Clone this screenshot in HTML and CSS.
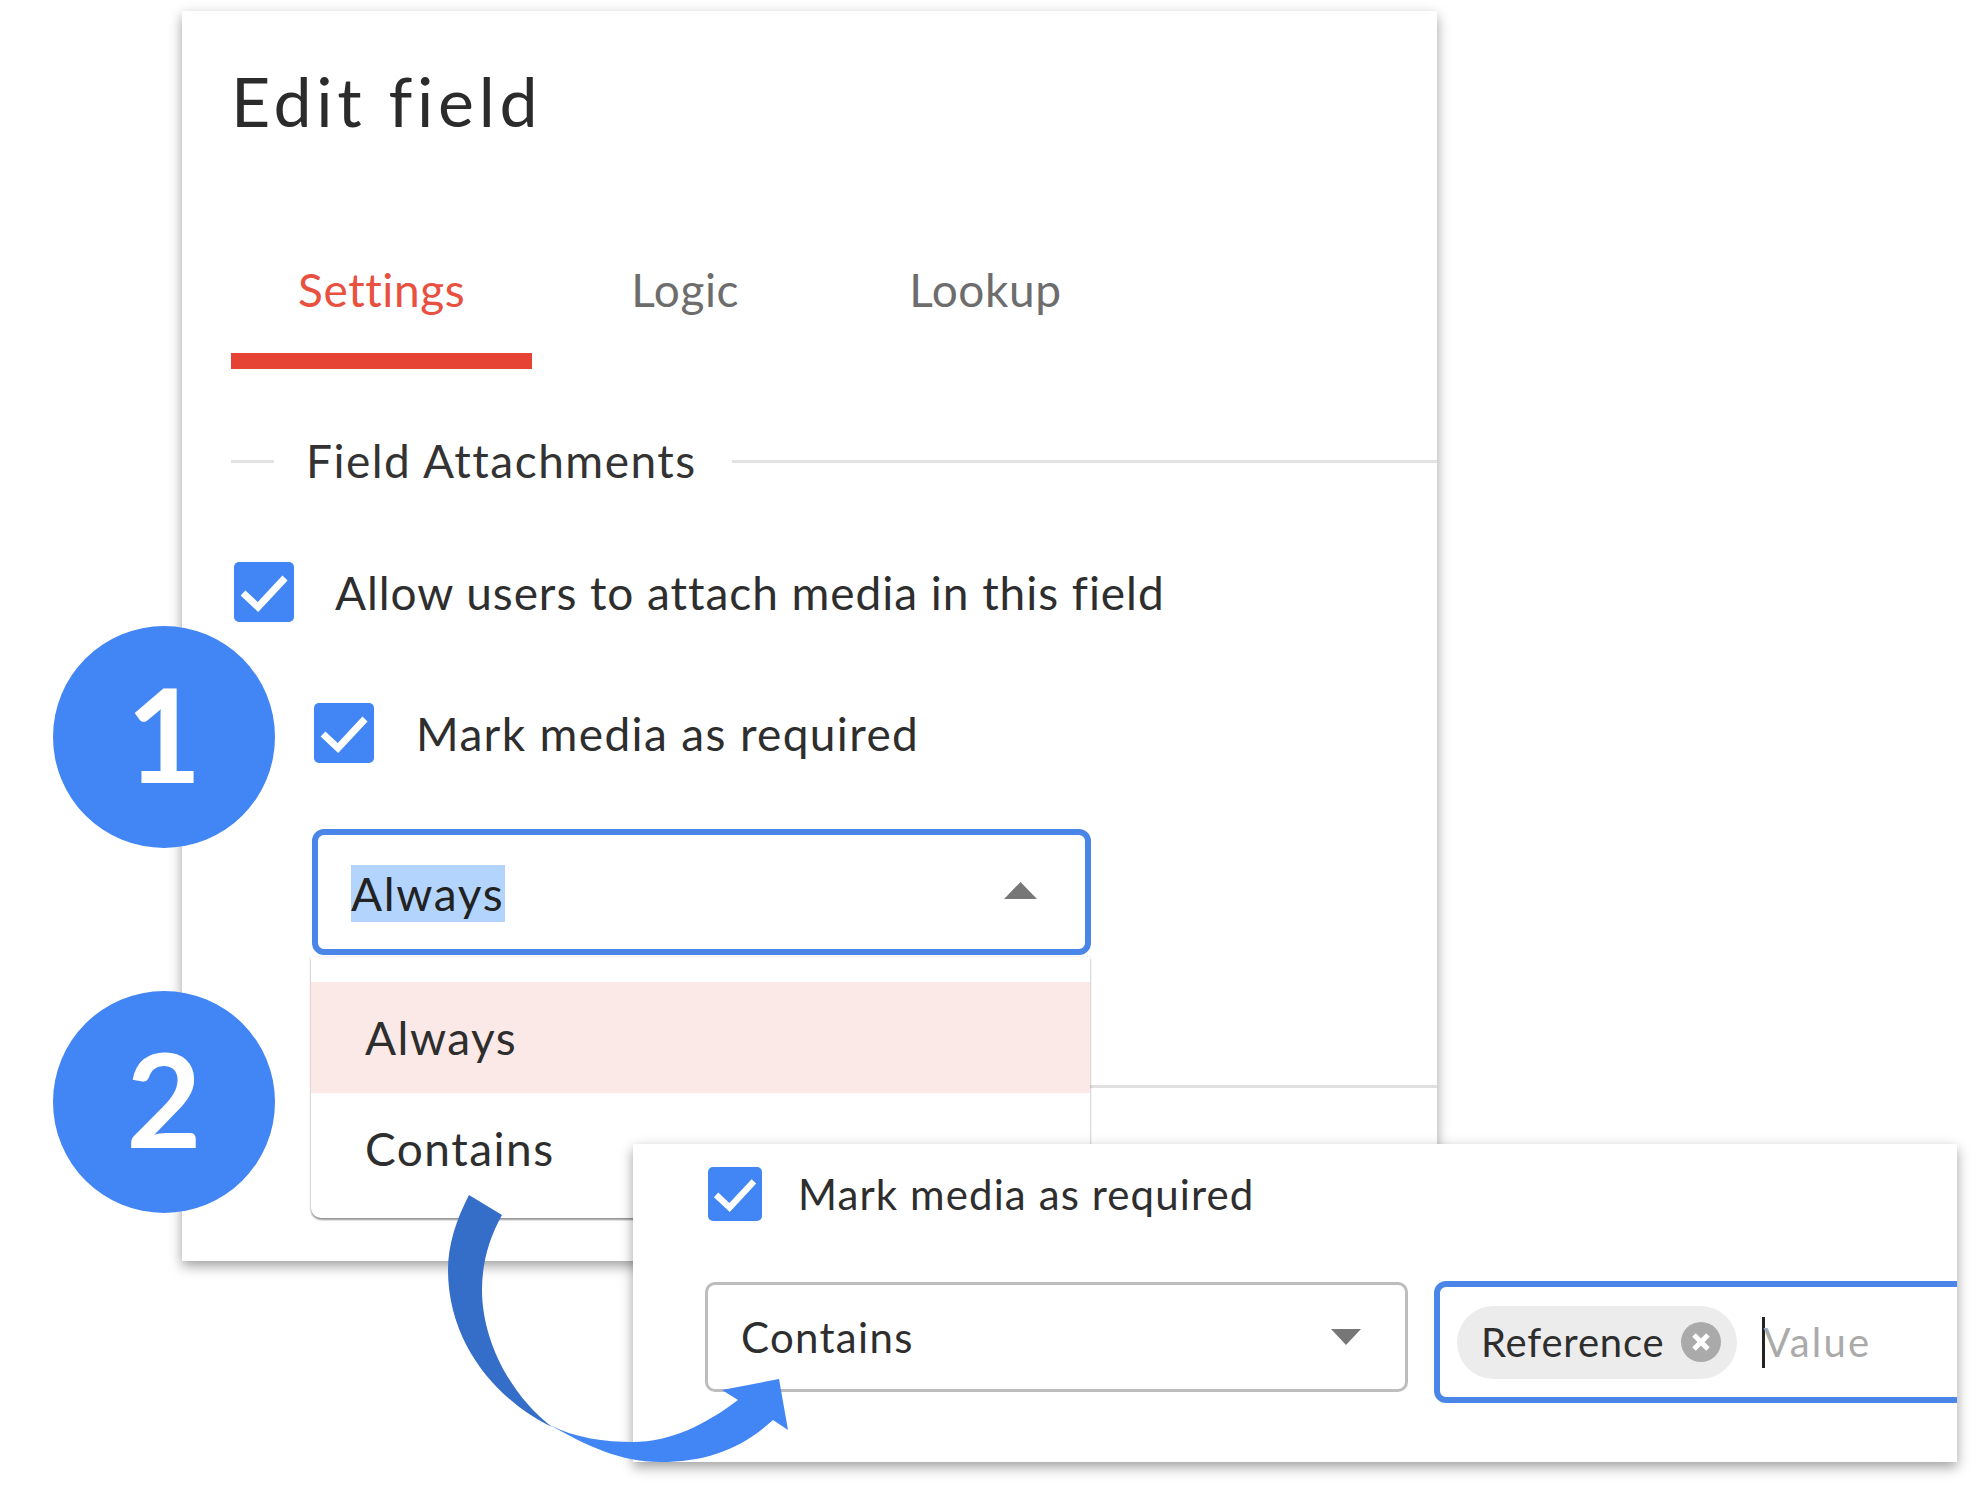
FILE: index.html
```html
<!DOCTYPE html>
<html lang="en">
<head>
<meta charset="utf-8">
<title>Edit field</title>
<link rel="stylesheet" href="styles.css">
</head>
<body>
<div class="stage">
  <section class="card">
    <h1 class="title">Edit field</h1>
    <nav class="tabs">
      <span class="tab tab-active">Settings</span>
      <span class="tab">Logic</span>
      <span class="tab tab-last">Lookup</span>
    </nav>
    <div class="section-head">
      <span class="rule rule-short"></span>
      <span class="section-label">Field Attachments</span>
      <span class="rule rule-long"></span>
    </div>
    <label class="check-row row-main">
      <span class="check"><svg viewBox="0 0 60 60" class="tick"><path d="M9 31 24 45 51 16"/></svg></span>
      <span class="check-label label-allow">Allow users to attach media in this field</span>
    </label>
    <label class="check-row row-sub">
      <span class="check"><svg viewBox="0 0 60 60" class="tick"><path d="M9 31 24 45 51 16"/></svg></span>
      <span class="check-label">Mark media as required</span>
    </label>
    <div class="select-wrap">
      <div class="select-open">
        <span class="selected-text">Always</span>
        <svg class="tri tri-up" viewBox="0 0 33 17"><path d="M16.5 0 33 17H0Z"/></svg>
      </div>
      <ul class="menu">
        <li class="menu-item menu-item-active">Always</li>
        <li class="menu-item">Contains</li>
      </ul>
    </div>
    <div class="card-line"></div>
  </section>

  <section class="card-two">
    <label class="check-row">
      <span class="check check-small"><svg viewBox="0 0 60 60" class="tick"><path d="M9 31 24 45 51 16"/></svg></span>
      <span class="check-label label-small">Mark media as required</span>
    </label>
    <div class="fields">
      <div class="select-closed">
        <span>Contains</span>
        <svg class="tri tri-down" viewBox="0 0 30 16"><path d="M0 0H30L15 16Z"/></svg>
      </div>
      <div class="value-input">
        <span class="chip">Reference
          <svg class="chip-close" viewBox="0 0 40 40"><circle cx="20" cy="20" r="20"/><path d="M13 13 27 27M27 13 13 27"/></svg>
        </span>
        <span class="caret"></span>
        <span class="placeholder">Value</span>
      </div>
    </div>
  </section>

  <div class="badge badge-one">1</div>
  <div class="badge badge-two">2</div>

  <svg class="arrow" viewBox="0 0 1972 1508" width="1972" height="1508">
    <path class="arrow-tail" d="M469 1195 502 1215C488 1240 482 1265 482 1290 482 1340 510 1395 552 1427 505 1405 448 1350 448 1270 448 1245 456 1220 469 1195Z"/>
    <path class="arrow-head" d="M550 1425C575 1438 605 1442 633 1442 670 1442 705 1425 738 1400L722 1390 779 1379 788 1430 773 1420C740 1450 705 1462 660 1462 620 1462 585 1445 550 1425Z"/>
  </svg>
</div>
</body>
</html>
```

FILE: styles.css
```css
* { box-sizing: border-box; }
html, body { margin: 0; background: #fff; }
body { font-family: "Lato", "Liberation Sans", sans-serif; color: #2e2e2e; }

.stage {
  position: relative;
  width: 1972px;
  height: 1508px;
  padding: 11px 0 0 182px;
  overflow: hidden;
}

.card {
  width: 1255px;
  height: 1250px;
  padding: 50px 0 0 49px;
  background: #fff;
  box-shadow: 0 5px 12px rgba(0, 0, 0, .38);
}

.title {
  margin: 0;
  font-size: 68px;
  line-height: 80px;
  font-weight: 400;
  letter-spacing: 4.7px;
  color: #2b2b2b;
}

.tabs { display: flex; gap: 32px; margin-top: 119px; }
.tab {
  padding: 0 67px 49px;
  font-size: 46px;
  line-height: 60px;
  letter-spacing: .6px;
  color: #6d6d6d;
}
.tab-active { color: #e8503f; border-bottom: 16px solid #e74335; padding-bottom: 33px; }
.tab-last { margin-left: 4px; }

.section-head { display: flex; align-items: center; gap: 32px; margin-top: 64px; }
.rule { height: 3px; background: #e2e2e2; }
.rule-short { width: 43px; }
.rule-long { flex: 1; }
.section-label { margin-right: 3px; font-size: 46px; line-height: 56px; letter-spacing: 1.5px; color: #333; }

.check-row { display: flex; align-items: center; }
.row-main { margin: 73px 0 0 3px; gap: 41px; }
.row-sub { margin: 81px 0 0 83px; gap: 42px; }

.check {
  width: 60px;
  height: 60px;
  flex: none;
  border-radius: 5px;
  background: #4285f4;
}
.check-small { width: 54px; height: 54px; }
.tick { display: block; width: 100%; height: 100%; }
.tick path { fill: none; stroke: #fff; stroke-width: 7; }

.check-label { padding-top: 2px; font-size: 46px; line-height: 58px; letter-spacing: 1.36px; }
.label-allow { letter-spacing: .95px; }
.label-small { padding-top: 0; font-size: 42px; line-height: 54px; letter-spacing: 1.1px; }

.select-wrap { position: relative; width: 779px; margin: 66px 0 0 81px; }
.select-open {
  display: flex;
  align-items: center;
  justify-content: space-between;
  height: 126px;
  padding: 2px 48px 0 33px;
  border: 6px solid #4a86e8;
  border-radius: 12px;
  font-size: 46px;
}
.selected-text { line-height: 57px; background: #b3d4fc; color: #222; letter-spacing: 1.7px; }
.tri { display: block; fill: #777; flex: none; }
.tri-up { width: 33px; height: 17px; margin-top: -5px; }
.tri-down { width: 30px; height: 16px; }

.menu {
  position: absolute;
  top: 128px;
  left: -1px;
  width: 779px;
  height: 261px;
  margin: 0;
  padding: 25px 0 0;
  list-style: none;
  background: #fff;
  border-radius: 0 0 10px 10px;
  box-shadow: 0 2px 2px rgba(0, 0, 0, .4), 0 0 3px rgba(0, 0, 0, .12);
}
.menu-item {
  height: 111px;
  padding-left: 54px;
  font-size: 46px;
  line-height: 111px;
  letter-spacing: 1.5px;
}
.menu-item-active { background: #fbe9e7; }

.card-line { height: 3px; margin: 130px 0 0 81px; background: #e0e0e0; }

.card-two {
  position: absolute;
  left: 633px;
  top: 1144px;
  width: 1324px;
  height: 318px;
  padding: 23px 0 0 75px;
  background: #fff;
  overflow: hidden;
  box-shadow: 0 5px 12px rgba(0, 0, 0, .38);
}
.card-two .check-row { gap: 36px; }

.fields { display: flex; align-items: flex-start; gap: 26px; margin: 60px 0 0 -3px; }
.select-closed {
  display: flex;
  align-items: center;
  justify-content: space-between;
  flex: none;
  width: 703px;
  height: 110px;
  margin-top: 1px;
  padding: 0 44px 0 33px;
  border: 3px solid #bdbdbd;
  border-radius: 10px;
  font-size: 42px;
  letter-spacing: 1.3px;
}
.value-input {
  display: flex;
  align-items: center;
  flex: none;
  width: 620px;
  height: 122px;
  padding-left: 17px;
  border: 6px solid #4a86e8;
  border-radius: 12px;
  font-size: 40px;
}
.chip {
  display: flex;
  align-items: center;
  gap: 17px;
  height: 73px;
  padding: 0 16px 0 24px;
  border-radius: 37px;
  background: #ececec;
  letter-spacing: .8px;
}
.chip-close { width: 40px; height: 40px; flex: none; }
.chip-close circle { fill: #aaa; }
.chip-close path { fill: none; stroke: #fff; stroke-width: 5; }
.caret { width: 3px; height: 51px; margin: 0 -2px 0 25px; background: #222; flex: none; }
.placeholder { color: #aaa; letter-spacing: 2.2px; }

.badge {
  position: absolute;
  left: 53px;
  width: 222px;
  height: 222px;
  border-radius: 50%;
  background: #4285f4;
  color: #fff;
  font-size: 130px;
  font-weight: 700;
  line-height: 214px;
  text-align: center;
}
.badge-one { top: 626px; }
.badge-two { top: 991px; }

.arrow { position: absolute; left: 0; top: 0; pointer-events: none; }
.arrow-tail { fill: #356ec9; }
.arrow-head { fill: #4285f4; }
```
